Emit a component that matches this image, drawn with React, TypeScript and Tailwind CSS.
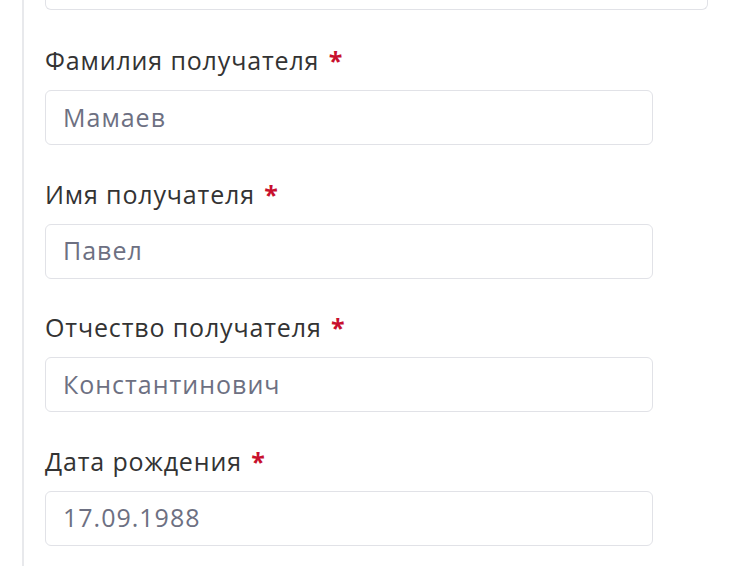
const fields = [
  { label: "Фамилия получателя", value: "Мамаев" },
  { label: "Имя получателя", value: "Павел" },
  { label: "Отчество получателя", value: "Константинович" },
  { label: "Дата рождения", value: "17.09.1988" },
];

export default function App() {
  return (
    <div className="h-[566px] w-[730px] overflow-hidden bg-white font-['Open_Sans',sans-serif]">
      <div className="ml-[22px] h-full border-l-2 border-[#e8e9ec] pl-[21px]">
        <div className="h-[10px] w-[663px] rounded-b-md border-x border-b border-[#e1e2e7]" />
        {fields.map((f, i) => (
          <div key={f.label} className={i === 0 ? "mt-[34px]" : "mt-[32.5px]"}>
            <div className="h-[32px] text-[25px] leading-[32px] tracking-[0.85px] text-[#333]">
              {f.label}{" "}
              <span className="ml-[2px] font-bold text-[#c8102e]">*</span>
            </div>
            <div className="mt-[14px] flex h-[55px] w-[608px] items-center rounded-md border border-[#e1e2e7] px-[17px] text-[25px] tracking-[1px] text-[#6d7082]">
              {f.value}
            </div>
          </div>
        ))}
      </div>
    </div>
  );
}
